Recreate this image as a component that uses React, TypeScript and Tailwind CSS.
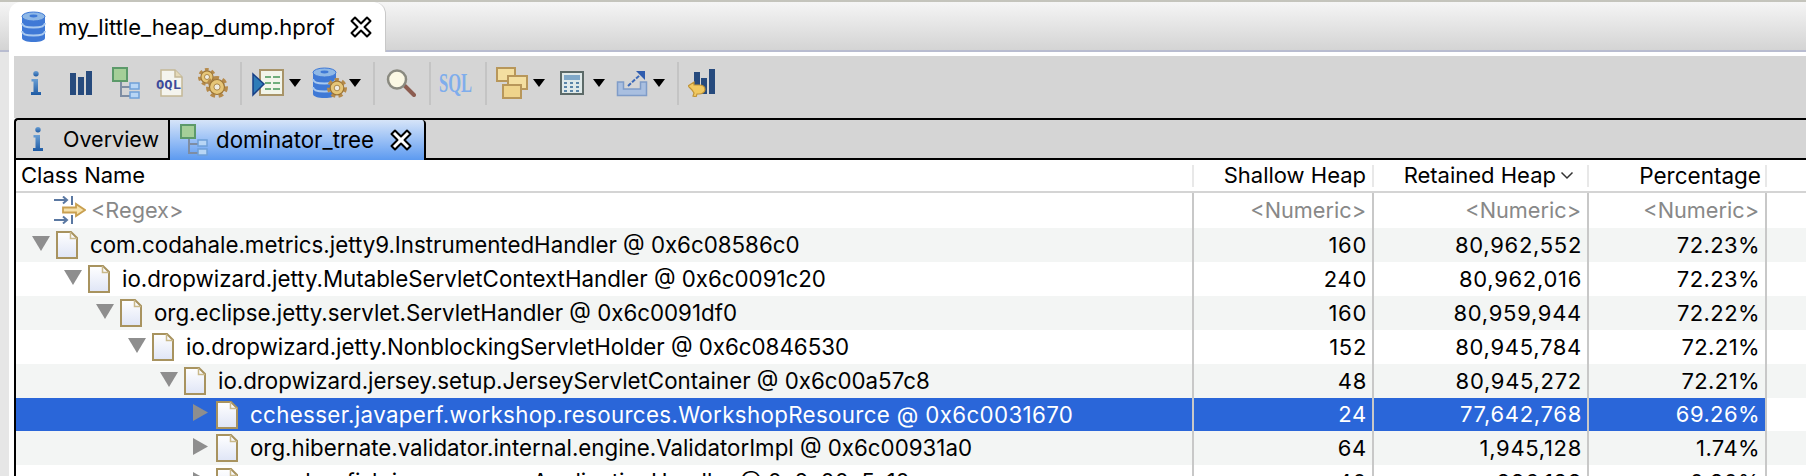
import React from "react";

const font = "font-['Inter','Liberation_Sans',sans-serif]";

function Sep() {
  return <div className="w-[2px] h-[43px] shrink-0 bg-[#c4c4c4]" />;
}

function Drop() {
  return (
    <svg width="14" height="10" viewBox="0 0 14 10" className="shrink-0">
      <path d="M1 1h12L7 9z" fill="#000" />
    </svg>
  );
}

function InfoIcon() {
  return (
    <svg width="10" height="24" viewBox="0 0 10 24" className="shrink-0">
      <defs>
        <linearGradient id="infoG" x1="0" y1="0" x2="0" y2="1">
          <stop offset="0" stopColor="#6a9fd4" />
          <stop offset="1" stopColor="#1d5aa4" />
        </linearGradient>
      </defs>
      <circle cx="5" cy="2.800" r="2.700" fill="url(#infoG)" />
      <path d="M0.500 8h6.500v13h3v3H0v-3h2.500V10.500H0.500z" fill="url(#infoG)" />
    </svg>
  );
}

function BarsIcon() {
  return (
    <svg width="22" height="24" viewBox="0 0 22 24" className="shrink-0">
      <rect x="0" y="2" width="6" height="22" fill="#264a7d" />
      <rect x="8" y="6" width="6" height="18" fill="#264a7d" />
      <rect x="16" y="0" width="6" height="24" fill="#264a7d" />
    </svg>
  );
}

function TreeIcon() {
  return (
    <svg width="28" height="32" viewBox="0 0 28 32" className="shrink-0">
      <path d="M9 14v15h9M9 20h9" fill="none" stroke="#7e8da3" strokeWidth="2" />
      <rect x="1" y="1" width="14" height="13" fill="#a5cf98" stroke="#5c9a6a" strokeWidth="2" />
      <rect x="18" y="16" width="9" height="6" fill="#b8d6f5" stroke="#6fa0d8" strokeWidth="1.500" />
      <rect x="18" y="25" width="9" height="6" fill="#b8d6f5" stroke="#6fa0d8" strokeWidth="1.500" />
    </svg>
  );
}

function OqlIcon() {
  return (
    <svg width="27" height="28" viewBox="0 0 27 28" className="shrink-0">
      <path d="M5 1h14l7 7v19H5z" fill="#f4f4ee" stroke="#c4b896" strokeWidth="1.500" />
      <path d="M19 1v7h7" fill="#e4d9b8" stroke="#c4b896" strokeWidth="1.500" />
      <text x="0" y="20" fontSize="12" fontWeight="700" fontFamily="'DejaVu Sans Mono', monospace" fill="#3d4a9a" textLength="25" lengthAdjust="spacingAndGlyphs">
        OQL
      </text>
    </svg>
  );
}

function Gear({ cx, cy, r }: { cx: number; cy: number; r: number }) {
  return (
    <g>
      <circle cx={cx} cy={cy} r={r * 0.85} fill="none" stroke="#b68a4a" strokeWidth={r * 0.3} strokeDasharray={`${r * 0.42} ${r * 0.33}`} />
      <circle cx={cx} cy={cy} r={r * 0.68} fill="#e6c678" stroke="#9c7434" strokeWidth="1.200" />
      <circle cx={cx} cy={cy} r={r * 0.28} fill="#f0ece0" stroke="#9c7434" strokeWidth="0.800" />
    </g>
  );
}

function GearsIcon() {
  return (
    <svg width="30" height="30" viewBox="0 0 30 30" className="shrink-0">
      <Gear cx={9} cy={9} r={9} />
      <Gear cx={19} cy={19} r={11} />
    </svg>
  );
}

function ListIcon() {
  return (
    <svg width="32" height="28" viewBox="0 0 32 28" className="shrink-0">
      <rect x="8" y="1" width="23" height="25" fill="#f2f5ea" stroke="#a89468" strokeWidth="2" />
      <path d="M13 8h6M21 8h7M13 14h6M21 14h7M13 20h6M21 20h7" stroke="#6fae7c" strokeWidth="2" />
      <path d="M1 5l11 10L1 26z" fill="#2f7cb8" stroke="#173f86" strokeWidth="1.500" />
    </svg>
  );
}

function DbIcon({ gear = false }: { gear?: boolean }) {
  return (
    <svg width={gear ? 36 : 25} height="32" viewBox={gear ? "0 0 36 32" : "0 0 25 32"} className="shrink-0">
      <path d="M1 5v22c0 2.500 5 4 11.500 4S24 29.500 24 27V5z" fill="#3f79d6" />
      <ellipse cx="12.500" cy="5.500" rx="11.500" ry="4.500" fill="#8fb8e6" stroke="#3f79d6" />
      <ellipse cx="12.500" cy="5" rx="4" ry="1.400" fill="#3f79d6" />
      <path d="M1 12c0 3 5 4.500 11.500 4.500S24 15 24 12M1 20c0 3 5 4.500 11.500 4.500S24 23 24 20" fill="none" stroke="#a9c9ef" strokeWidth="2" />
      {gear && <Gear cx={25} cy={21} r={10} />}
    </svg>
  );
}

function SearchIcon() {
  return (
    <svg width="30" height="28" viewBox="0 0 30 28" className="shrink-0">
      <path d="M19 17l9 9" stroke="#8c5c50" strokeWidth="4" strokeLinecap="round" />
      <circle cx="11" cy="10.500" r="9" fill="#fbf8e4" stroke="#8a8a80" strokeWidth="2.500" />
    </svg>
  );
}

function SqlIcon() {
  return (
    <svg width="34" height="32" viewBox="0 0 34 32" className="shrink-0">
      <text x="0" y="25" fontSize="28" fontWeight="700" fontFamily="'Liberation Serif', serif" fill="#7fadec" textLength="33" lengthAdjust="spacingAndGlyphs">
        SQL
      </text>
    </svg>
  );
}

function WindowsIcon() {
  return (
    <svg width="32" height="32" viewBox="0 0 32 32" className="shrink-0">
      <rect x="1" y="1" width="18" height="13" fill="#f4dfa0" stroke="#b8975a" strokeWidth="2" />
      <rect x="12" y="9" width="19" height="13" fill="#f4dfa0" stroke="#b8975a" strokeWidth="2" />
      <rect x="7" y="18" width="18" height="13" fill="#efd48c" stroke="#b8975a" strokeWidth="2" />
    </svg>
  );
}

function CalcIcon() {
  return (
    <svg width="24" height="24" viewBox="0 0 24 24" className="shrink-0">
      <rect x="1" y="1" width="22" height="22" fill="#dfe9e9" stroke="#5c6a68" strokeWidth="2" />
      <rect x="4" y="4" width="16" height="5" fill="#7fa8c8" />
      <path d="M4 12h3M10 12h3M16 12h3M4 16h3M10 16h3M16 16h3M4 20h3M10 20h3M16 20h3" stroke="#5a85a8" strokeWidth="2" />
    </svg>
  );
}

function ExportIcon() {
  return (
    <svg width="32" height="27" viewBox="0 0 32 27" className="shrink-0">
      <path d="M1.500 12v13.500h29V12h-6v7h-17v-7z" fill="#a9bfe0" stroke="#7f9cc8" strokeWidth="1.500" />
      <path d="M12 16L24 5" stroke="#3c69b8" strokeWidth="2" strokeDasharray="4 1.500" />
      <path d="M20 1h9v9z" fill="#2f5cae" />
    </svg>
  );
}

function BarsBackIcon() {
  return (
    <svg width="28" height="28" viewBox="0 0 28 28" className="shrink-0">
      <rect x="6" y="3" width="6" height="22" fill="#264a7d" />
      <rect x="13" y="9" width="6" height="16" fill="#264a7d" />
      <rect x="21" y="0" width="6" height="25" fill="#264a7d" />
      <path d="M0 17l6-4v3h5c4 0 6 2 6 4.500S14 25 11 25H9l-1 3-3-1 1-3-2-3z" fill="#f0c860" stroke="#c09438" strokeWidth="1.200" />
    </svg>
  );
}

function CloseIcon() {
  return (
    <svg width="22" height="22" viewBox="0 0 22 22" className="shrink-0">
      <path
        d="M5 1.500L11 7.500 17 1.500 20.500 5 14.500 11 20.500 17 17 20.500 11 14.500 5 20.500 1.500 17 7.500 11 1.500 5z"
        fill="#fff"
        stroke="#000"
        strokeWidth="2"
        strokeLinejoin="round"
      />
    </svg>
  );
}

function DocIcon() {
  return (
    <svg width="22" height="28" viewBox="0 0 22 28" className="shrink-0">
      <defs>
        <linearGradient id="docG" x1="0" y1="0" x2="0" y2="1">
          <stop offset="0" stopColor="#ffffff" />
          <stop offset="1" stopColor="#dfe5f6" />
        </linearGradient>
      </defs>
      <path d="M1 1H15L21 7V27H1z" fill="url(#docG)" stroke="#a8935f" strokeWidth="2" />
      <path d="M14.500 1V7.500H21" fill="none" stroke="#c9b98a" strokeWidth="1.500" />
    </svg>
  );
}

function FilterIcon() {
  return (
    <svg width="32" height="28" viewBox="0 0 32 28" className="shrink-0">
      <path d="M0 4h13M9 0.500l4 3.500-4 3.500M18 0v9M0 24h13M9 20.500l4 3.500-4 3.500M18 19v9" fill="none" stroke="#5a78a2" strokeWidth="2" />
      <path d="M9 11.500h13V8l9 6-9 6v-3.500H9z" fill="#f6e2ac" stroke="#c9a050" strokeWidth="1.800" />
    </svg>
  );
}

function Arrow({ open }: { open: boolean }) {
  return (
    <svg width="18" height="17" viewBox="0 0 18 17" className="shrink-0 -translate-y-[2px]">
      {open ? <path d="M0 1h18L9 16z" fill="#8e8e8e" /> : <path d="M1 0l15 8.500L1 17z" fill="#8e8e8e" />}
    </svg>
  );
}

const rows = [
  { depth: 0, open: true, name: "com.codahale.metrics.jetty9.InstrumentedHandler @ 0x6c08586c0", shallow: "160", retained: "80,962,552", pct: "72.23%" },
  { depth: 1, open: true, name: "io.dropwizard.jetty.MutableServletContextHandler @ 0x6c0091c20", shallow: "240", retained: "80,962,016", pct: "72.23%" },
  { depth: 2, open: true, name: "org.eclipse.jetty.servlet.ServletHandler @ 0x6c0091df0", shallow: "160", retained: "80,959,944", pct: "72.22%" },
  { depth: 3, open: true, name: "io.dropwizard.jetty.NonblockingServletHolder @ 0x6c0846530", shallow: "152", retained: "80,945,784", pct: "72.21%" },
  { depth: 4, open: true, name: "io.dropwizard.jersey.setup.JerseyServletContainer @ 0x6c00a57c8", shallow: "48", retained: "80,945,272", pct: "72.21%" },
  { depth: 5, open: false, selected: true, name: "cchesser.javaperf.workshop.resources.WorkshopResource @ 0x6c0031670", shallow: "24", retained: "77,642,768", pct: "69.26%" },
  { depth: 5, open: false, name: "org.hibernate.validator.internal.engine.ValidatorImpl @ 0x6c00931a0", shallow: "64", retained: "1,945,128", pct: "1.74%" },
  { depth: 5, open: false, name: "org.glassfish.jersey.server.ApplicationHandler @ 0x6c00a5a10", shallow: "40", retained: "886,128", pct: "0.80%" },
];

const indents = ["pl-[16px]", "pl-[48px]", "pl-[80px]", "pl-[112px]", "pl-[144px]", "pl-[176px]"];

export default function App() {
  return (
    <div className={`${font} w-full h-[476px] overflow-hidden flex flex-col bg-[#e6e6e6] border-t-2 border-[#c4c4bc] text-[22.3px] text-black`}>
      {/* Editor tab bar */}
      <div className="h-[50px] shrink-0 flex pl-[9px] border-b-2 border-[#b8bcd0] bg-gradient-to-b from-[#f5f5f5] to-[#d4d4d4]">
        <div className="w-[377px] h-[50px] flex items-center bg-white rounded-t-[12px] border-r border-[#c8c8c8] pl-[12px]">
          <DbIcon />
          <span className="ml-[12px] w-[292px] text-[22px]">my_little_heap_dump.hprof</span>
          <CloseIcon />
        </div>
      </div>

      <div className="flex-1 ml-[9px] flex flex-col pl-[5px] pt-[4px] bg-white min-h-0">
        {/* Toolbar */}
        <div className="h-[62px] shrink-0 flex items-center bg-[#d5d5d5] pb-[8px]">
          <div className="w-[44px] flex justify-center"><InfoIcon /></div>
          <div className="w-[45px] flex justify-center"><BarsIcon /></div>
          <div className="w-[46px] flex justify-center"><TreeIcon /></div>
          <div className="w-[40px] flex justify-center"><OqlIcon /></div>
          <div className="w-[48px] flex justify-center"><GearsIcon /></div>
          <div className="ml-[3px]"><Sep /></div>
          <div className="ml-[10px]"><ListIcon /></div>
          <div className="ml-[4px]"><Drop /></div>
          <div className="ml-[10px]"><DbIcon gear /></div>
          <div className="ml-[0px]"><Drop /></div>
          <div className="ml-[11px]"><Sep /></div>
          <div className="ml-[11px]"><SearchIcon /></div>
          <div className="ml-[13px]"><Sep /></div>
          <div className="ml-[8px]"><SqlIcon /></div>
          <div className="ml-[12px]"><Sep /></div>
          <div className="ml-[9px]"><WindowsIcon /></div>
          <div className="ml-[4px]"><Drop /></div>
          <div className="ml-[14px]"><CalcIcon /></div>
          <div className="ml-[8px]"><Drop /></div>
          <div className="ml-[10px]"><ExportIcon /></div>
          <div className="ml-[4px]"><Drop /></div>
          <div className="ml-[11px]"><Sep /></div>
          <div className="ml-[9px]"><BarsBackIcon /></div>
        </div>

        {/* View tabs */}
        <div className="h-[42px] shrink-0 flex bg-[#d5d5d5] border-y-2 border-black border-l-2 rounded-tl-[4px]">
          <div className="w-[154px] h-[40px] flex items-center border-r-2 border-b-2 border-black pl-[17px]">
            <InfoIcon />
            <span className="ml-[20px] text-[21.5px]">Overview</span>
          </div>
          <div className="w-[256px] h-[40px] flex items-center bg-gradient-to-b from-[#d6e4f8] to-[#5c9af0] border-r-2 border-black rounded-tr-[4px] pl-[10px]">
            <TreeIcon />
            <span className="ml-[8px] w-[174px]">dominator_tree</span>
            <CloseIcon />
          </div>
        </div>

        {/* Table */}
        <div className="flex-1 min-h-0 bg-white border-l-2 border-black">
          <div className="h-[33px] flex border-b-2 border-[#d4d4d4] text-[22px]">
            <div className="w-[1176px] pl-[5px] flex items-center">Class Name</div>
            <div className="w-[180px] flex items-center">
              <div className="w-full h-[22px] flex items-center justify-end border-l-2 border-[#e8e8e8] pr-[6px]">Shallow Heap</div>
            </div>
            <div className="w-[215px] flex items-center">
              <div className="w-full h-[22px] flex items-center justify-end gap-[4px] border-l-2 border-[#e8e8e8] pr-[13px]">
                Retained Heap
                <svg width="14" height="9" viewBox="0 0 14 9" className="shrink-0"><path d="M1.500 1.500L7 7l5.500-5.500" fill="none" stroke="#333" strokeWidth="1.500" /></svg>
              </div>
            </div>
            <div className="w-[180px] flex items-center">
              <div className="w-full h-[22px] flex items-center justify-end border-x-2 border-[#e8e8e8] pr-[4px] text-[22.5px]">Percentage</div>
            </div>
          </div>

          <div className="h-[35px] flex items-center text-[#888] text-[21.7px]">
            <div className="w-[1176px] flex items-center pl-[38px]">
              <FilterIcon />
              <span className="ml-[5px]">&lt;Regex&gt;</span>
            </div>
            <div className="w-[180px] h-full border-l-2 border-[#c8c8c8] flex items-center justify-end pr-[6px]">&lt;Numeric&gt;</div>
            <div className="w-[215px] h-full border-l-2 border-[#c8c8c8] flex items-center justify-end pr-[6px]">&lt;Numeric&gt;</div>
            <div className="w-[180px] h-full border-x-2 border-[#c8c8c8] flex items-center justify-end pr-[6px]">&lt;Numeric&gt;</div>
          </div>

          {rows.map((r, i) => {
            const bg = i % 2 === 0 ? "bg-[#f3f5f4]" : "bg-white";
            const cell = r.selected ? "bg-[#2a66d9] text-white" : "";
            return (
              <div key={r.name} className={`${r.selected ? "h-[33px]" : "h-[34px]"} flex ${r.selected ? "bg-white" : bg}`}>
                <div className={`w-[1176px] flex items-center ${indents[r.depth]} ${cell}`}>
                  <Arrow open={r.open} />
                  <span className="ml-[6px] flex"><DocIcon /></span>
                  <span className={`ml-[12px] whitespace-nowrap ${r.selected ? "tracking-[0.36px]" : ""}`}>{r.name}</span>
                </div>
                <div className={`w-[180px] border-l-2 border-[#c8c8c8] flex items-center justify-end pr-[5px] text-[22px] tracking-[0.7px] ${cell}`}>{r.shallow}</div>
                <div className={`w-[215px] border-l-2 border-[#c8c8c8] flex items-center justify-end pr-[5px] text-[22px] tracking-[0.7px] ${cell}`}>{r.retained}</div>
                <div className={`w-[180px] border-x-2 border-[#c8c8c8] flex items-center justify-end pr-[5px] text-[22px] tracking-[0.4px] ${cell}`}>{r.pct}</div>
              </div>
            );
          })}
        </div>
      </div>
    </div>
  );
}
